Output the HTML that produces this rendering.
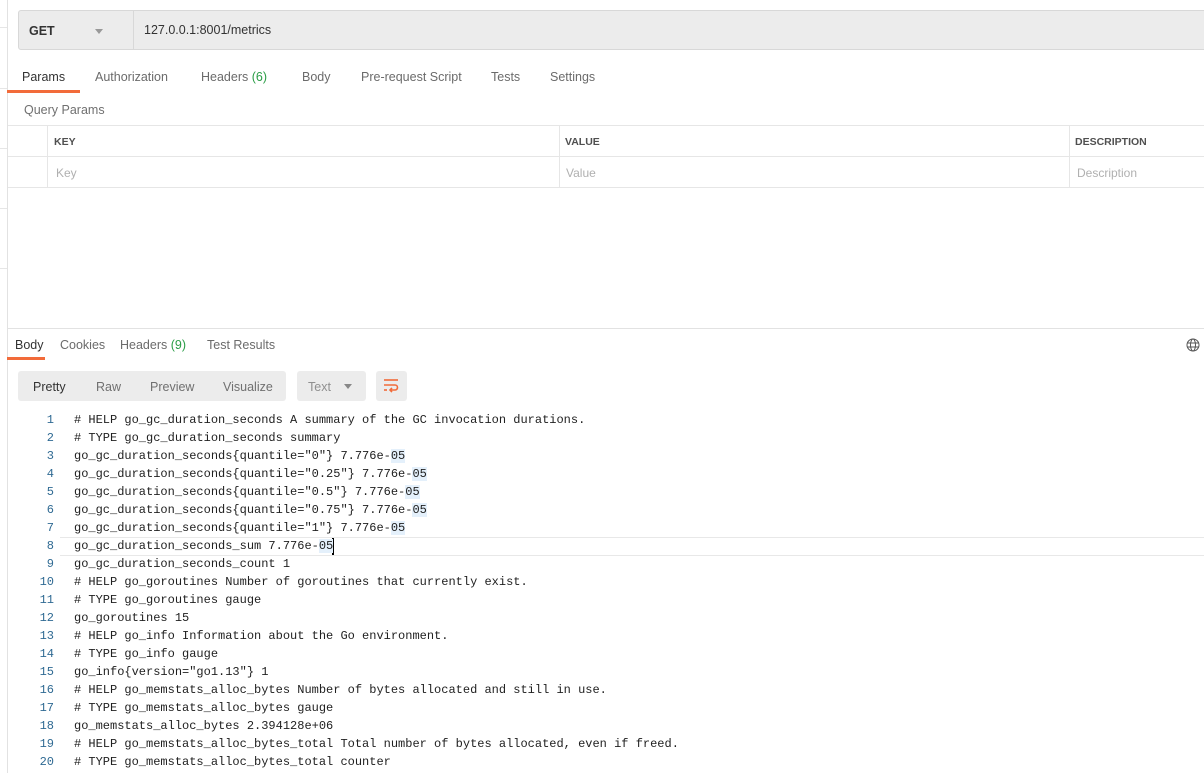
<!DOCTYPE html>
<html><head><meta charset="utf-8"><style>
*{margin:0;padding:0;box-sizing:border-box}
body{width:1204px;height:773px;overflow:hidden;background:#fff;font-family:"Liberation Sans",sans-serif;font-size:12.5px;color:#505050;position:relative}
.a{position:absolute}
.hl{position:absolute;left:0;width:7px;height:1px;background:#e6e6e6}
.tab{position:absolute;top:70px;font-size:12.5px;color:#6b6b6b}
.th{position:absolute;top:136px;font-size:10.5px;font-weight:bold;color:#505050}
.ph{position:absolute;top:166px;color:#b0b0b0;font-size:12px}
.code{position:absolute;left:0;top:411px;font-family:"Liberation Mono",monospace;font-size:12px;color:#212121}
.ln{height:18px;line-height:18px;white-space:pre;position:relative}
.ln .n{position:absolute;left:0;width:54px;text-align:right;color:#2f6a93}
.ln .t{position:absolute;left:74px}
.m{background:#e4f0fb}
</style></head><body>
<div class="a" style="left:7px;top:0;width:1px;height:773px;background:#e2e2e2"></div>
<div class="hl" style="top:27px"></div><div class="hl" style="top:88px"></div><div class="hl" style="top:148px"></div><div class="hl" style="top:208px"></div><div class="hl" style="top:268px"></div>

<div class="a" style="left:18px;top:10px;width:1190px;height:40px;background:#ececec;border:1px solid #d8d8d8;border-radius:3px"></div>
<div class="a" style="left:133px;top:11px;width:1px;height:38px;background:#d8d8d8"></div>
<div class="a" style="left:29px;top:24px;font-size:12.5px;color:#333;font-weight:bold">GET</div>
<div class="a" style="left:95px;top:29px;width:0;height:0;border-left:4px solid transparent;border-right:4px solid transparent;border-top:5px solid #999"></div>
<div class="a" style="left:144px;top:23px;color:#333;font-size:12.5px">127.0.0.1:8001/metrics</div>

<div class="tab" style="left:22px;color:#333">Params</div>
<div class="tab" style="left:95px">Authorization</div>
<div class="tab" style="left:201px">Headers <span style="color:#2a9d46">(6)</span></div>
<div class="tab" style="left:302px">Body</div>
<div class="tab" style="left:361px">Pre-request Script</div>
<div class="tab" style="left:491px">Tests</div>
<div class="tab" style="left:550px">Settings</div>
<div class="a" style="left:7px;top:90px;width:73px;height:3px;background:#f26b3a"></div>
<div class="a" style="left:24px;top:103px;color:#707070">Query Params</div>

<div class="a" style="left:8px;top:125px;width:1196px;height:1px;background:#e6e6e6"></div>
<div class="a" style="left:8px;top:156px;width:1196px;height:1px;background:#e6e6e6"></div>
<div class="a" style="left:8px;top:187px;width:1196px;height:1px;background:#e6e6e6"></div>
<div class="a" style="left:47px;top:125px;width:1px;height:62px;background:#e6e6e6"></div>
<div class="a" style="left:559px;top:125px;width:1px;height:62px;background:#e6e6e6"></div>
<div class="a" style="left:1069px;top:125px;width:1px;height:62px;background:#e6e6e6"></div>
<div class="th" style="left:54px">KEY</div>
<div class="th" style="left:565px">VALUE</div>
<div class="th" style="left:1075px">DESCRIPTION</div>
<div class="ph" style="left:56px">Key</div>
<div class="ph" style="left:566px">Value</div>
<div class="ph" style="left:1077px">Description</div>

<div class="a" style="left:8px;top:328px;width:1196px;height:1px;background:#e2e2e2"></div>
<div class="a" style="left:15px;top:338px;color:#333">Body</div>
<div class="a" style="left:60px;top:338px;color:#6b6b6b">Cookies</div>
<div class="a" style="left:120px;top:338px;color:#6b6b6b">Headers <span style="color:#2a9d46">(9)</span></div>
<div class="a" style="left:207px;top:338px;color:#6b6b6b">Test Results</div>
<div class="a" style="left:7px;top:357px;width:38px;height:3px;background:#f26b3a"></div>
<svg class="a" style="left:1186px;top:338px" width="14" height="14" viewBox="0 0 14 14" fill="none" stroke="#555" stroke-width="1"><circle cx="7" cy="7" r="6"/><ellipse cx="7" cy="7" rx="2.5" ry="6"/><line x1="1" y1="5" x2="13" y2="5"/><line x1="1" y1="9" x2="13" y2="9"/></svg>

<div class="a" style="left:18px;top:371px;width:268px;height:30px;background:#ececec;border-radius:3px"></div>
<div class="a" style="left:33px;top:380px;color:#333">Pretty</div>
<div class="a" style="left:96px;top:380px;color:#707070">Raw</div>
<div class="a" style="left:150px;top:380px;color:#707070">Preview</div>
<div class="a" style="left:223px;top:380px;color:#707070">Visualize</div>
<div class="a" style="left:297px;top:371px;width:69px;height:30px;background:#ececec;border-radius:3px"></div>
<div class="a" style="left:308px;top:380px;color:#909090">Text</div>
<div class="a" style="left:344px;top:384px;width:0;height:0;border-left:4px solid transparent;border-right:4px solid transparent;border-top:5px solid #888"></div>
<div class="a" style="left:376px;top:371px;width:31px;height:30px;background:#ececec;border-radius:3px"></div>
<svg class="a" style="left:383px;top:377px" width="17" height="17" viewBox="0 0 17 17" fill="none" stroke="#f26b3a" stroke-width="1.6"><line x1="1" y1="3" x2="15" y2="3"/><path d="M1 8h11a2.5 2.5 0 0 1 0 5H7"/><path d="M9 11l-2 2 2 2"/><line x1="1" y1="13" x2="4" y2="13"/></svg>

<div class="a" style="left:60px;top:537px;width:1144px;height:1px;background:#e8e8e8"></div>
<div class="a" style="left:60px;top:555px;width:1144px;height:1px;background:#e8e8e8"></div>
<div class="a" style="left:332px;top:538px;width:2px;height:17px;background:#000"></div>
<div class="code">
<div class="ln"><span class="n">1</span><span class="t"># HELP go_gc_duration_seconds A summary of the GC invocation durations.</span></div>
<div class="ln"><span class="n">2</span><span class="t"># TYPE go_gc_duration_seconds summary</span></div>
<div class="ln"><span class="n">3</span><span class="t">go_gc_duration_seconds{quantile="0"} 7.776e-<span class="m">05</span></span></div>
<div class="ln"><span class="n">4</span><span class="t">go_gc_duration_seconds{quantile="0.25"} 7.776e-<span class="m">05</span></span></div>
<div class="ln"><span class="n">5</span><span class="t">go_gc_duration_seconds{quantile="0.5"} 7.776e-<span class="m">05</span></span></div>
<div class="ln"><span class="n">6</span><span class="t">go_gc_duration_seconds{quantile="0.75"} 7.776e-<span class="m">05</span></span></div>
<div class="ln"><span class="n">7</span><span class="t">go_gc_duration_seconds{quantile="1"} 7.776e-<span class="m">05</span></span></div>
<div class="ln"><span class="n">8</span><span class="t">go_gc_duration_seconds_sum 7.776e-<span class="m">05</span></span></div>
<div class="ln"><span class="n">9</span><span class="t">go_gc_duration_seconds_count 1</span></div>
<div class="ln"><span class="n">10</span><span class="t"># HELP go_goroutines Number of goroutines that currently exist.</span></div>
<div class="ln"><span class="n">11</span><span class="t"># TYPE go_goroutines gauge</span></div>
<div class="ln"><span class="n">12</span><span class="t">go_goroutines 15</span></div>
<div class="ln"><span class="n">13</span><span class="t"># HELP go_info Information about the Go environment.</span></div>
<div class="ln"><span class="n">14</span><span class="t"># TYPE go_info gauge</span></div>
<div class="ln"><span class="n">15</span><span class="t">go_info{version="go1.13"} 1</span></div>
<div class="ln"><span class="n">16</span><span class="t"># HELP go_memstats_alloc_bytes Number of bytes allocated and still in use.</span></div>
<div class="ln"><span class="n">17</span><span class="t"># TYPE go_memstats_alloc_bytes gauge</span></div>
<div class="ln"><span class="n">18</span><span class="t">go_memstats_alloc_bytes 2.394128e+06</span></div>
<div class="ln"><span class="n">19</span><span class="t"># HELP go_memstats_alloc_bytes_total Total number of bytes allocated, even if freed.</span></div>
<div class="ln"><span class="n">20</span><span class="t"># TYPE go_memstats_alloc_bytes_total counter</span></div>
</div>
</body></html>
